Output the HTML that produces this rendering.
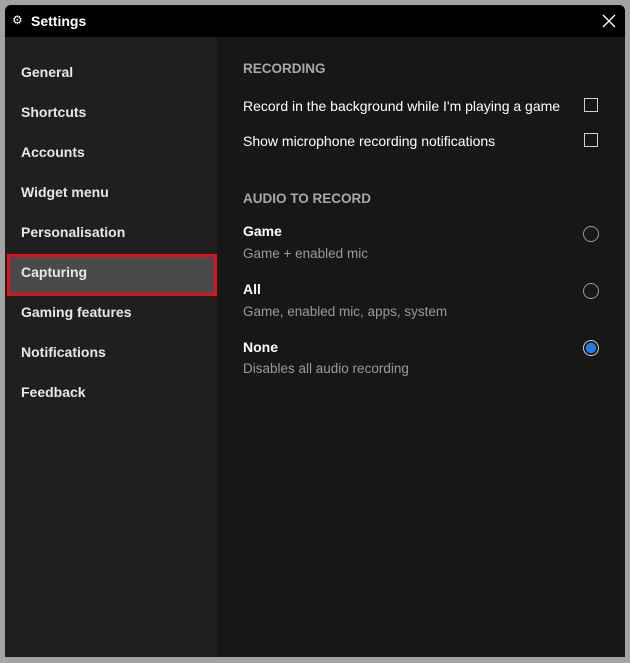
<!DOCTYPE html><html><head><style>
body{margin:0;width:630px;height:663px;background:#a3a3a3;font-family:"Liberation Sans",sans-serif;position:relative;overflow:hidden}
.win{position:absolute;left:5px;top:5px;width:620px;height:652px;background:#171717;border-radius:6px 6px 0 0;overflow:hidden}
.title{position:absolute;left:0;top:0;width:620px;height:32px;background:#000;color:#fff;font-size:14px;font-weight:bold}
.side{position:absolute;left:0;top:32px;width:212px;height:620px;background:#1f1f1f}
.t{position:absolute;color:#fff;font-size:14px;white-space:nowrap}
.nav{font-weight:bold;color:#e8e8e8;left:16px}
.sub{color:#9a9a9a;font-size:13.5px}
.h{color:#a8a8a8;font-weight:bold;font-size:13.5px}
.cb{position:absolute;width:12px;height:12px;border:1.5px solid #cfcfcf;left:579px}
.rd{position:absolute;width:14px;height:14px;border:1.5px solid #999;border-radius:50%;left:578px}
</style></head><body><div class="win">
<div class="title"><span style="position:absolute;left:7px;top:8px;font-size:12px;font-weight:normal">⚙</span><span style="position:absolute;left:26px;top:8px">Settings</span>
<svg style="position:absolute;left:597px;top:9px" width="14" height="14"><path d="M1 1L13 13M13 1L1 13" stroke="#fff" stroke-width="1.3"/></svg></div>
<div class="side"></div>
<div style="position:absolute;left:2px;top:249px;width:204px;height:36px;background:#4a4a4a;border:3px solid #e01020"></div>
<div class="t nav" style="top:59px">General</div>
<div class="t nav" style="top:99px">Shortcuts</div>
<div class="t nav" style="top:139px">Accounts</div>
<div class="t nav" style="top:179px">Widget menu</div>
<div class="t nav" style="top:219px">Personalisation</div>
<div class="t nav" style="top:259px">Capturing</div>
<div class="t nav" style="top:299px">Gaming features</div>
<div class="t nav" style="top:339px">Notifications</div>
<div class="t nav" style="top:379px">Feedback</div>
<div class="t h" style="left:238px;top:56px">RECORDING</div>
<div class="t" style="left:238px;top:93px">Record in the background while I'm playing a game</div>
<div class="cb" style="top:93px"></div>
<div class="t" style="left:238px;top:128px">Show microphone recording notifications</div>
<div class="cb" style="top:128px"></div>
<div class="t h" style="left:238px;top:186px">AUDIO TO RECORD</div>
<div class="t" style="left:238px;top:218px;font-weight:bold">Game</div>
<div class="t sub" style="left:238px;top:241px">Game + enabled mic</div>
<div class="rd" style="top:221px"></div>
<div class="t" style="left:238px;top:276px;font-weight:bold">All</div>
<div class="t sub" style="left:238px;top:299px">Game, enabled mic, apps, system</div>
<div class="rd" style="top:278px"></div>
<div class="t" style="left:238px;top:334px;font-weight:bold">None</div>
<div class="t sub" style="left:238px;top:356px">Disables all audio recording</div>
<div class="rd" style="top:335px;border-color:#ccc;background:radial-gradient(circle,#1a7fe0 0 5px,#171717 5.5px)"></div>
</div></body></html>
